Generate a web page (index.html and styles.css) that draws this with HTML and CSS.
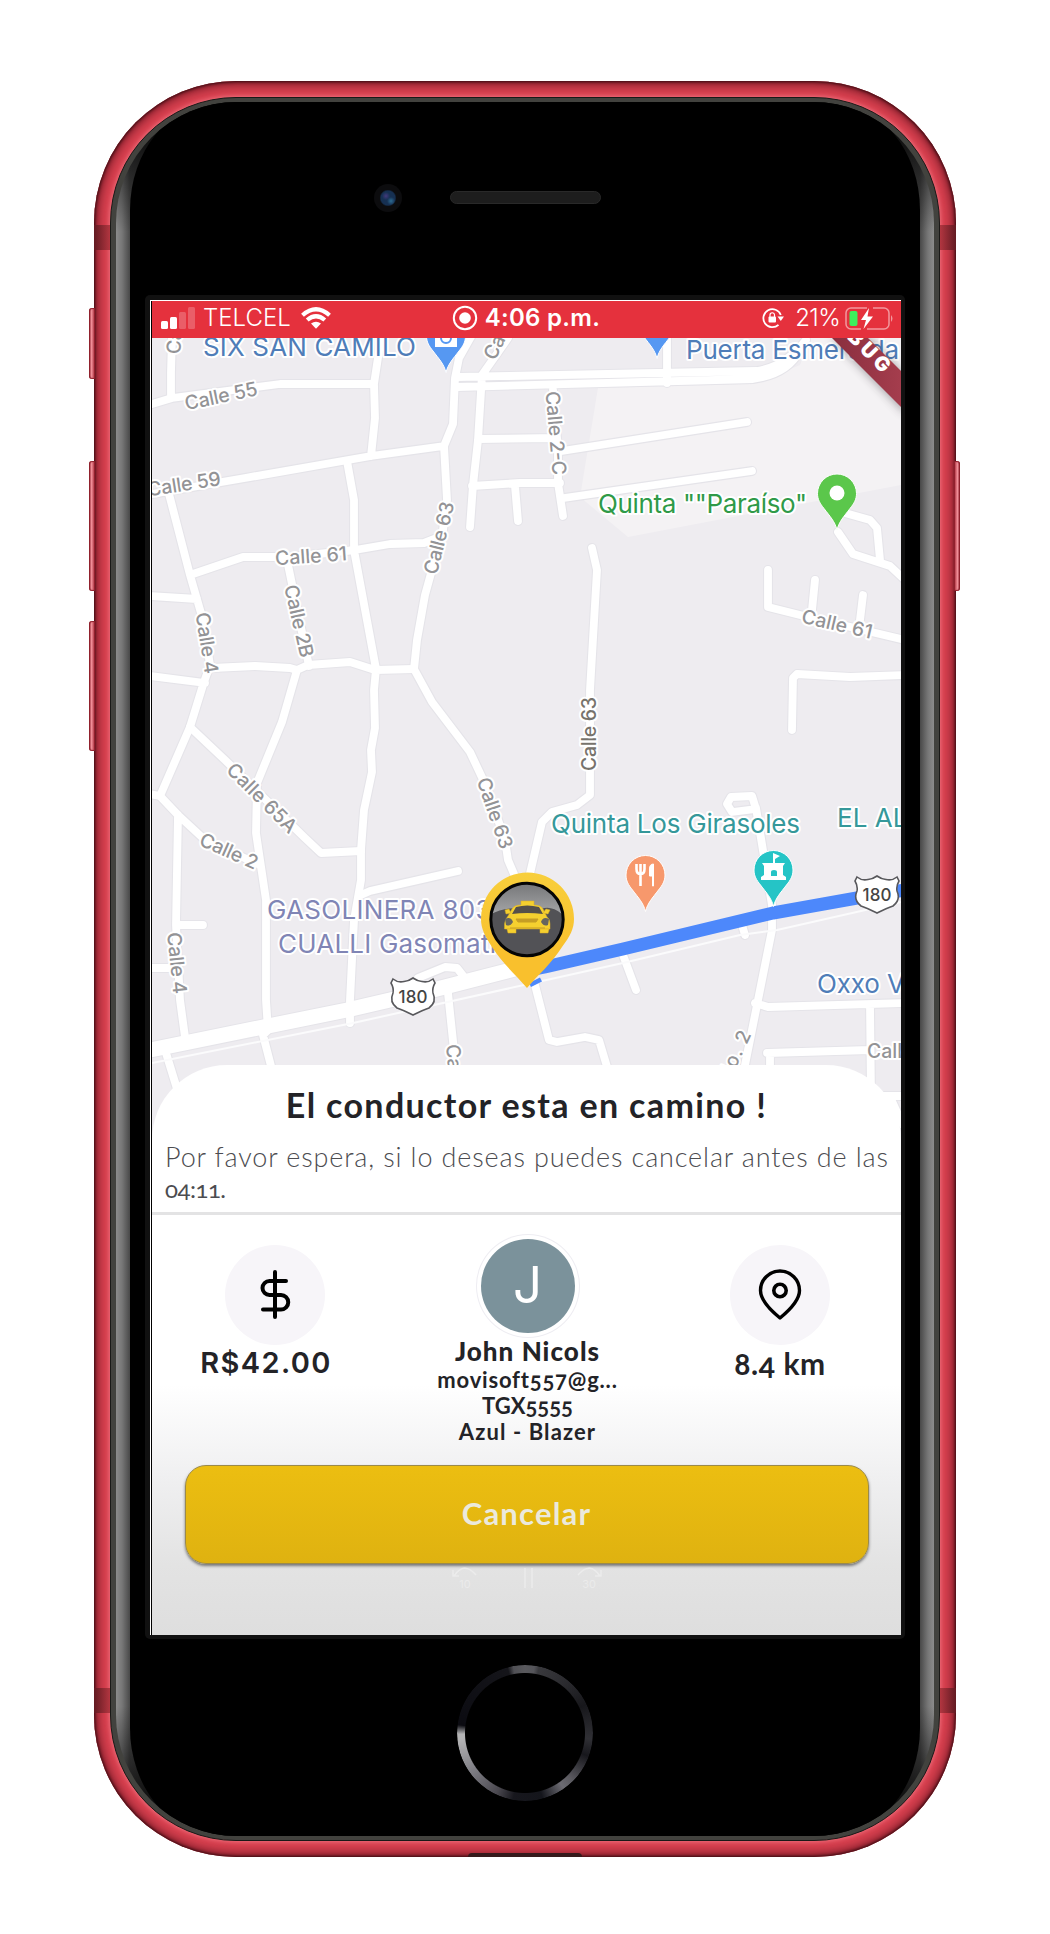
FILE: index.html
```html
<!DOCTYPE html>
<html lang="es">
<head>
<meta charset="utf-8">
<title>El conductor esta en camino</title>
<link rel="stylesheet" href="styles.css">
</head>
<body>
<main class="phone">
  <i class="key key-mute"></i><i class="key key-up"></i><i class="key key-down"></i><i class="key key-power"></i>
  <i class="band band-tl"></i><i class="band band-tr"></i><i class="band band-bl"></i><i class="band band-br"></i>
  <i class="port"></i>
  <div class="rim">
    <div class="glass">
      <div class="bezel-top"><span class="camera"></span><span class="speaker"></span></div>
      <div class="frame">
        <div class="screen">
          <header class="status">
            <svg class="signal" width="34" height="22" viewBox="0 0 34 22"><g fill="#fff"><rect x="0" y="14" width="7" height="8" rx="1.5"/><rect x="9" y="10" width="7" height="12" rx="1.5"/><g opacity=".22"><rect x="18" y="5" width="7" height="17" rx="1.5"/><rect x="27" y="0" width="7" height="22" rx="1.5"/></g></g></svg>
            <span class="carrier">TELCEL</span>
            <svg class="wifi" width="30" height="22" viewBox="0 0 30 22"><g fill="none" stroke="#fff" stroke-width="4.2"><path d="M1.5 8.2Q15-3.800 28.500 8.200"/><path d="M6.200 13Q15 5.400 23.800 13"/></g><path d="M10 16.600Q15 12.800 20 16.600L15 21.700Z" fill="#fff"/></svg>
            <svg class="rec" width="26" height="26" viewBox="0 0 26 26"><circle cx="13" cy="13" r="11.200" fill="none" stroke="#fff" stroke-width="2"/><circle cx="13" cy="13" r="5.800" fill="#fff"/></svg>
            <span class="time">4:06 p.m.</span>
            <svg class="lock" width="22" height="22" viewBox="0 0 22 22"><path d="M18.800 8A9 9 0 1 0 16.500 17.800" fill="none" stroke="#fff" stroke-width="1.800"/><path d="M15.500 9.500H22L18.800 14Z" fill="#fff"/><rect x="6.500" y="9.500" width="7.500" height="6" rx="1" fill="#fff"/><path d="M8 10V8a2.200 2.200 0 0 1 4.500 0v2" fill="none" stroke="#fff" stroke-width="1.200"/></svg>
            <span class="percent">21%</span>
            <svg class="battery" width="49" height="23" viewBox="0 0 49 23"><g fill="none" stroke="#fff" stroke-opacity=".5" stroke-width="1.500"><path d="M22 1H6a5 5 0 0 0-5 5v11a5 5 0 0 0 5 5h10"/><path d="M28 1h11a5 5 0 0 1 5 5v11a5 5 0 0 1-5 5H22"/></g><path d="M46 8q3 3.500 0 7Z" fill="#fff" opacity=".5"/><rect x="4.500" y="4" width="8" height="15" rx="2" fill="#3df05c"/><path d="M24 1L16 13h5l-2.500 9L28 9.500h-5.500Z" fill="#fff"/></svg>
          </header>
          <svg class="map" width="749" height="802" viewBox="152 338 749 802">
            <defs>
              <linearGradient id="gold" x1="0" y1="0" x2="0" y2="1"><stop offset="0" stop-color="#f8cf3c"/><stop offset=".7" stop-color="#f9c02d"/></linearGradient>
              <linearGradient id="shine" x1="0" y1="0" x2="0" y2="1"><stop offset="0" stop-color="#77787a"/><stop offset="1" stop-color="#a4a5a7"/></linearGradient>
              <linearGradient id="ribbon" x1="0" y1="0" x2="1" y2="0"><stop offset="0" stop-color="#852c3c"/><stop offset="1" stop-color="#a83f4f"/></linearGradient>
              <filter id="soft" x="-20%" y="-50%" width="140%" height="200%"><feGaussianBlur stdDeviation="5"/></filter>
              <path id="drop" d="M0 36.500C-2 28-7 23-13 15C-17 10-19.500 6-19.500 0A19.500 19.500 0 0 1 19.500 0C19.500 6 17 10 13 15C7 23 2 28 0 36.500Z"/>
              <g id="shield"><path d="M-20-17Q-15-13-9-14.500Q-4-15 0-18Q4-15 9-14.500Q15-13 20-17L22-13Q19-8 20-3Q24 6 16 12Q10 14 0 19Q-10 14-16 12Q-24 6-20-3Q-19-8-22-13Z" fill="#fff" stroke="#58585c" stroke-width="1.600"/><text class="route-no" x="0" y="7" textLength="29">180</text></g>
              <g id="roads">
                <path d="M172 338L171 372V398M152 404L172 398L280 384H373M381 338L374 384L375 418L371 456M152 494L245 478L371 456L444 446M444 446L453 424L455 378L459 358L472 335M444 446L447 500L443 530L425 595L417 640L414 669L432 702L470 752L487 788L505 840L508 860L520 888"/>
                <path d="M347 461L354 500V550L376 669L374 690L375 728L371 750L372 772L364 810L361 850V880L354 920L350 1000V1023M190 575L243 557H290L355 550L390 544L424 543L442 536M169 494L190 575L203 620L210 665L203 685L190 727L160 796L150 794M150 596L197 599M150 676L205 683M212 668L255 666L290 668L297 670L308 665L350 662L375 670L414 669M287 560L309 666M297 670L282 722L257 783L256 833L266 900V1000L268 1030L263 1035L271 1066"/>
                <path d="M190 727L225 760L305 838L321 853L361 851M160 796L178 815L205 840L260 865M178 815L176 925L180 1000L185 1037M176 925H203M150 968H175M361 895L370 891L458 871M418 978L445 967L457 968L468 982M448 993L456 1070M166 1053L178 1092M535 985L549 1040L557 1042L585 1037L599 1040L608 1070"/>
                <path d="M457 377L757 371Q785 367 806 340M457 387L753 379Q788 374 800 350M667 383V338M508 338L482 375L478 440L473 485L470 527M478 439L555 438M472 486L520 483H560M515 486L518 521M553 390L558 450V483L563 516M562 451L747 422M564 498L752 471"/>
                <path d="M592 548L597 570L590 690L590 795L577 805L552 812L542 822L525 895M845 513L870 520L877 528L880 560M838 532L853 554L890 566L905 580M768 570V607L800 615L905 640M815 580L812 610M863 595L860 620M792 730L793 678L797 674L850 677L905 675"/>
                <path d="M727 804L731 797L752 796L756 809L732 812ZM756 808L772 905V930L744 1070M755 1003L768 1007L905 1003M870 1005L871 1096H905M767 1053L870 1050M770 1055V1072M623 955L636 990M742 925L745 935M871 1096L890 1097L903 1125"/>
                <path class="highway" d="M145 1051L347 1010L433 990L530 965"/>
              </g>
            </defs>
            <rect x="152" y="338" width="749" height="802" fill="#eeecf0"/>
            <path d="M598 388L753 384L800 365L810 338H901V485L628 537L580 497Z" fill="#f4f2f4"/>
            <use href="#roads" class="road-edge"/>
            <use href="#roads" class="road"/>
            <path class="rail" d="M152 1063L353 1023L533 983L623 963L740 935L777 930L901 902"/>
            <path class="trip" d="M535 969L545 967L623 949L773 913L857 898L905 890"/>
            <path d="M530 985L541 979.500" stroke="#4d88fb" stroke-width="4.500"/>
            <g class="street">
              <text transform="translate(221 396) rotate(-12)" dy=".35em" textLength="74">Calle 55</text>
              <text transform="translate(184 484) rotate(-9)" dy=".35em" textLength="74">Calle 59</text>
              <text transform="translate(311 556) rotate(-4)" dy=".35em" textLength="72">Calle 61</text>
              <text transform="translate(439 538) rotate(-76)" dy=".35em" textLength="74">Calle 63</text>
              <text transform="translate(207 643) rotate(81)" dy=".35em" textLength="62">Calle 4</text>
              <text transform="translate(299 621) rotate(77)" dy=".35em" textLength="74">Calle 2B</text>
              <text transform="translate(262 798) rotate(45)" dy=".35em" textLength="90">Calle 65A</text>
              <text transform="translate(229 851) rotate(24)" dy=".35em" textLength="62">Calle 2</text>
              <text transform="translate(495 813) rotate(71)" dy=".35em" textLength="74">Calle 63</text>
              <text transform="translate(177 963) rotate(84)" dy=".35em" textLength="62">Calle 4</text>
              <text transform="translate(456 1081) rotate(85)" dy=".35em" textLength="74">Calle 57</text>
              <text transform="translate(505 325) rotate(-64)" dy=".35em" textLength="74">Calle 63</text>
              <text transform="translate(176 317) rotate(-86)" dy=".35em" textLength="74">Calle 53</text>
              <text transform="translate(556 433) rotate(85)" dy=".35em" textLength="84">Calle 2-C</text>
              <text class="street-dark" transform="translate(589 734) rotate(-90)" dy=".35em" textLength="74">Calle 63</text>
              <text transform="translate(837 624) rotate(13)" dy=".35em" textLength="72">Calle 61</text>
              <text transform="translate(734 1056) rotate(-65)" dy=".35em" textLength="54">No. 2</text>
              <text x="905" y="1058" textLength="76">Calle 65</text>
            </g>
            <g class="place">
              <text class="c-blue" x="203" y="356" textLength="213">SIX SAN CAMILO</text>
              <text class="c-blue" x="686" y="359" textLength="213">Puerta Esmeralda</text>
              <text class="c-green" x="598" y="513" textLength="209">Quinta ""Paraíso"</text>
              <text class="c-teal" x="551" y="833" textLength="249">Quinta Los Girasoles</text>
              <text class="c-teal" x="837" y="827" textLength="112">EL ALMA</text>
              <text class="c-violet" x="267" y="919" textLength="241">GASOLINERA 8036</text>
              <text class="c-violet" x="278" y="953" textLength="233">CUALLI Gasomatic</text>
              <text class="c-blue" x="817" y="993" textLength="104">Oxxo VA</text>
            </g>
            <g class="pin">
              <use href="#drop" x="446" y="336" fill="#5698f2"/>
              <use href="#drop" x="657" y="322" fill="#5698f2"/>
              <use href="#drop" x="837" y="493.500" fill="#5bc74b"/>
              <use href="#drop" x="645.500" y="875" fill="#f7986c"/>
              <use href="#drop" x="773.500" y="870" fill="#25c4c6"/>
            </g>
            <path d="M435 336H457V347H435Z" fill="#fff"/><circle cx="446" cy="338" r="5" fill="none" stroke="#5698f2" stroke-width="2"/>
            <circle cx="837" cy="493" r="7.500" fill="#fff"/>
            <g fill="none" stroke="#fff"><path d="M636.500 864v5q0 5 4 5t4-5v-5M640.500 864v22" stroke-width="2.600"/><path d="M652.500 886v-10h-3v-7q0-5 4-5v22Z" fill="#fff" stroke-width="1"/></g>
            <path d="M761 880V877L764 875V866L762 863H773V853L780 856L775 859V863H785L783 866V875L786 877V880Z" fill="#fff"/><path d="M771 876v-4q0-2 3-2t3 2v4Z" fill="#25c4c6"/>
            <use href="#shield" x="413" y="996"/>
            <use href="#shield" x="877" y="894"/>
            <path d="M527 988C516 975 502 963 492 947C485 936 481 929 481 919A46 46 0 0 1 574 919C574 929 570 936 562 947C552 963 538 975 527 988Z" fill="url(#gold)"/>
            <circle cx="527" cy="919.500" r="36" fill="#525256"/>
            <path d="M491 914A36 36 0 0 1 562 914Q551 905 541 909Q508 905 491 914Z" fill="url(#shine)"/>
            <circle cx="527" cy="919.500" r="36.200" fill="none" stroke="#050505" stroke-width="3"/>
            <g fill="#f5d02f" stroke="#dcae24" stroke-width=".5"><path d="M521 905V901H534V905Q541 905 543 909L547 917Q550 919 550 924V929H504.500V924Q505 919 508 916L512 909Q514 905 521 905Z"/><path d="M506 914l-1-4 4-1 2 4ZM548 914l2-4-4-1-3 4ZM507 929h9v4h-8ZM540 929h9l-1 4h-8Z"/></g>
            <path d="M516 907Q527 904 539 907L543 914Q527 912 512 914Z" fill="#55504a"/><path d="M505 919Q511 916 513 922Q510 927 506 925ZM549 919Q543 916 541 922Q544 927 548 925Z" fill="#66655f"/><path d="M516 919h22l-2 3h-18ZM510 928h35" fill="#c69e25" stroke="#c69e25" stroke-width="1"/>
            <path d="M831 338L907 415V378L870 338Z" fill="#302b30" opacity=".4" filter="url(#soft)"/>
            <path d="M820 326L910 416V380L855 325Z" fill="url(#ribbon)"/>
            <text class="debug" transform="translate(882.500 374) rotate(45)" textLength="86">DEBUG</text>
          </svg>
          <section class="sheet">
            <h1>El conductor esta en camino !</h1>
            <p class="note">Por favor espera, si lo deseas puedes cancelar antes de las <br><span class="limit">04:11.</span></p>
            <div class="details">
              <div class="detail">
                <span class="bubble"><svg width="48" height="52" viewBox="0 0 48 52"><path d="M24 3V48M35 12H18.500a7 7 0 0 0 0 14H30a7 7 0 0 1 0 14.500H12" fill="none" stroke="#000" stroke-width="4" stroke-linecap="round"/></svg></span>
                <strong class="price">R$42.00</strong>
              </div>
              <div class="driver">
                <span class="avatar">J</span>
                <strong class="name">John Nicols</strong>
                <span class="email">movisoft557@g...</span>
                <span class="plate">TGX5555</span>
                <span class="car">Azul - Blazer</span>
              </div>
              <div class="detail">
                <span class="bubble"><svg width="48" height="52" viewBox="0 0 48 52"><path d="M24 49Q4.500 33 4.500 21.500a19.500 19.500 0 0 1 39 0Q43.500 33 24 49Z" fill="none" stroke="#000" stroke-width="3.400" stroke-linejoin="round"/><circle cx="24" cy="21.500" r="6.200" fill="none" stroke="#000" stroke-width="3.600"/></svg></span>
                <strong class="distance">8.4 km</strong>
              </div>
            </div>
            <button class="cancel">Cancelar</button>
            <svg class="ghost" width="150" height="24" viewBox="0 0 150 24"><g fill="none" stroke="#ececec" stroke-width="1.500"><path d="M1 4v6h6M2 10Q12-5 24 9M73 2v20M80 2v20M149 4v6h-6M148 10Q138-5 126 9"/></g><text x="13" y="22">10</text><text x="137" y="22">30</text></svg>
          </section>
        </div>
      </div>
      <div class="bezel-bottom"><span class="home"></span></div>
    </div>
  </div>
</main>
</body>
</html>
```
FILE: styles.css
```css
* { box-sizing: border-box; }
body {
  margin: 0;
  height: 1934px;
  padding: 81px 0 0 94px;
  background: #fff;
  font-family: Lato, "Open Sans", sans-serif;
  color: #232327;
  overflow: hidden;
}

/* Device body */
.phone {
  position: relative;
  width: 862px;
  height: 1776px;
  padding: 16px;
  border-radius: 142px;
  background: #d8404f;
  box-shadow: inset 0 0 3px 1px #3a0a10, inset 0 0 10px 4px #7d1c29;
}
.rim {
  height: 1744px;
  padding: 4px 5px;
  border-radius: 126px;
  background: #42423e;
  border: 1px solid #191917;
  box-shadow: 0 0 4px 1px #ee6f7c;
}
.glass {
  position: relative;
  display: flex;
  flex-direction: column;
  align-items: center;
  height: 1734px;
  border-radius: 121px;
  overflow: hidden;
  background:
    linear-gradient(#000 0, transparent 130px, transparent calc(100% - 130px), #000 100%),
    linear-gradient(90deg, #8c8c8c 0, #777 6px, #484848 14px, #222 60px, #222 calc(100% - 60px), #484848 calc(100% - 14px), #777 calc(100% - 6px), #8c8c8c 100%);
}
.glass::before {
  content: "";
  position: absolute;
  inset: 0 14px;
  border-radius: 90px / 108px;
  background: #000;
}
.bezel-top, .frame, .bezel-bottom { position: relative; }
.key {
  position: absolute;
  width: 6px;
  height: 130px;
  border-radius: 3px 0 0 3px;
  background: linear-gradient(90deg, #8b1f2c, #f3909a 40%, #a92c3a);
  box-shadow: inset 0 0 1px 1px #8e1f2b;
}
.key-mute { left: -5px; top: 227px; height: 71px; }
.key-up { left: -5px; top: 380px; }
.key-down { left: -5px; top: 540px; }
.key-power { right: -4px; top: 380px; transform: scaleX(-1); }
.band { position: absolute; width: 16px; height: 25px; background: linear-gradient(90deg, #621a22, #b23640); }
.band-tl { left: 0; top: 144px; }
.band-tr { right: 0; top: 144px; transform: scaleX(-1); }
.band-bl { left: 0; top: 1607px; }
.band-br { right: 0; top: 1607px; transform: scaleX(-1); }
.port { position: absolute; left: 374px; bottom: 0; width: 114px; height: 4px; border-radius: 4px 4px 0 0; background: #35191b; }

.bezel-top { width: 818px; height: 193px; padding: 0 0 2px 258px; display: flex; align-items: center; gap: 48px; }
.camera { width: 28px; height: 28px; border-radius: 50%; background: radial-gradient(circle at 17px 17px, #2d6b92 0, transparent 4px), radial-gradient(circle at 12px 12px, #433a7c 0, transparent 4px), radial-gradient(circle, #163052 0 7px, #0c0c0e 8.500px); }
.speaker { width: 151px; height: 13px; border-radius: 7px; background: #1d1d1d; border: 1px solid #292929; }
.bezel-bottom { flex: 1; display: flex; align-items: center; padding-bottom: 10px; }
.home {
  width: 136px;
  height: 136px;
  border-radius: 50%;
  background: conic-gradient(#59595d 0, #55555a 8deg, #39393d 12deg, #2a2a2e 40deg, #17171b 65deg, #303035 95deg, #17171c 110deg, #5b5a60 135deg, #6c6b72 145deg, #14151b 165deg, #17171d 190deg, #4a484f 205deg, #77767d 230deg, #b4b4b5 265deg, #b4b4b5 269deg, #0b0b11 277deg, #15151a 345deg, #505055 350deg, #59595d 360deg);
  -webkit-mask: radial-gradient(circle, transparent 59.500px, #000 60.500px);
  mask: radial-gradient(circle, transparent 59.500px, #000 60.500px);
}

/* Display */
.frame { width: 760px; height: 1344px; padding: 5px 4px 4px 5px; border-radius: 5px; background: #111; }
.screen {
  width: 751px;
  height: 1335px;
  display: flex;
  flex-direction: column;
  border-top: 1px solid #fff;
  border-left: 1px solid #fff;
  padding-left: 1px;
  background: #000;
  overflow: hidden;
}
.status {
  flex: none;
  height: 37px;
  display: flex;
  align-items: center;
  padding: 0 7px 3px 9px;
  background: #e5313d;
  color: #fff;
  font: 400 24px/34px Inter, sans-serif;
}
.status svg { flex: none; display: block; }
.carrier { width: 88px; margin-left: 8px; font-weight: 300; }
.wifi { margin-left: 10px; }
.rec { margin-left: 121px; }
.time { margin-left: 7px; width: 116px; font-weight: 600; white-space: nowrap; letter-spacing: .3px; }
.lock { margin-left: 162px; }
.percent { margin-left: 11px; width: 48px; font-weight: 300; letter-spacing: -.6px; }
.battery { margin-left: 2px; }

.map { flex: none; display: block; }
.map text, .ghost text { font-family: Inter, sans-serif; }
.road, .road-edge { fill: none; stroke-linejoin: round; stroke-linecap: round; }
.road { stroke: #fff; stroke-width: 7.800px; --highway-width: 15px; }
.road-edge { stroke: #e5e4e9; stroke-width: 10px; --highway-width: 17px; }
.highway { stroke-width: var(--highway-width); }
.rail { fill: none; stroke: #fbfbfc; stroke-width: 2px; }
.trip { fill: none; stroke: #4d88fb; stroke-width: 13px; stroke-linejoin: round; }
.street text { font-size: 19.500px; font-weight: 500; fill: #939396; stroke: #fff; stroke-width: 4px; stroke-linejoin: round; paint-order: stroke; text-anchor: middle; }
.street .street-dark { fill: #77736c; }
.place text { font-size: 26px; stroke: #fff; stroke-width: 4px; stroke-linejoin: round; paint-order: stroke; }
.c-blue { fill: #4f7db8; }
.c-green { fill: #2f9a48; }
.c-teal { fill: #35989a; }
.c-violet { fill: #8085b5; }
.pin { stroke: #fff; stroke-width: 1px; }
.route-no { font-size: 17px; font-weight: 500; fill: #444; text-anchor: middle; }
.debug { font-size: 20px; font-weight: 900; fill: #fff; text-anchor: end; }

.sheet {
  position: relative;
  flex: 1;
  margin-top: -75px;
  border-radius: 75px 75px 0 0;
  background: linear-gradient(#fff 0, #fff 320px, #f0f0f1 410px, #e3e3e3 500px, #dedede 100%);
  display: flex;
  flex-direction: column;
  align-items: center;
}
h1 { margin: 18px 0 0; height: 50px; font-size: 34px; line-height: 44px; font-weight: 700; letter-spacing: 1.350px; white-space: nowrap; }
.note { align-self: stretch; height: 74px; margin: 8px 0 0; padding-left: 13px; border-bottom: 3px solid #e3e3e4; font-size: 27px; line-height: 31px; font-weight: 300; color: #4c4c50; letter-spacing: .860px; white-space: nowrap; }
.limit { font-size: 24px; letter-spacing: -.5px; font-weight: 400; font-variant-numeric: oldstyle-nums; }
.details { align-self: stretch; height: 250px; display: flex; justify-content: space-between; padding: 0 71px 0 73px; }
.detail { width: 100px; padding-top: 30px; display: flex; flex-direction: column; align-items: center; }
.bubble { width: 100px; height: 100px; border-radius: 50%; background: #f7f5f9; display: flex; align-items: center; justify-content: center; }
.detail strong { height: 36px; white-space: nowrap; font-size: 30px; line-height: 36px; font-weight: 700; letter-spacing: .6px; font-variant-numeric: oldstyle-nums; }
.detail .price { margin-left: -18px; font-family: Inter, sans-serif; font-size: 29px; font-weight: 600; letter-spacing: 1.400px; }
.driver { width: 190px; display: flex; flex-direction: column; align-items: center; padding-top: 24px; font-size: 22px; line-height: 26px; font-weight: 700; white-space: nowrap; font-variant-numeric: oldstyle-nums; }
.avatar { width: 94px; height: 94px; flex: none; border-radius: 50%; background: #7b929b; color: #fff; font: 400 51px/92px Inter, sans-serif; text-align: center; box-shadow: 0 0 0 4px #fff, 0 0 0 5px #eeedf2; }
.name { height: 31px; margin-top: 3px; font-size: 26px; line-height: 30px; letter-spacing: 1.050px; }
.email { letter-spacing: .8px; }
.car { letter-spacing: 1.100px; }
.cancel { width: 684px; height: 99px; flex: none; padding: 0 0 3px; border: 1px solid #9b8a4a; border-radius: 21px; background: linear-gradient(#ecbe11, #dfb210); box-shadow: 0 2px 3px #777; color: #ebe9dc; font: 700 31px/40px Lato, sans-serif; letter-spacing: 1.200px; }
.ghost { margin-top: 2px; flex: none; }
.ghost text { font-size: 11px; fill: #ebebeb; text-anchor: middle; }
```
